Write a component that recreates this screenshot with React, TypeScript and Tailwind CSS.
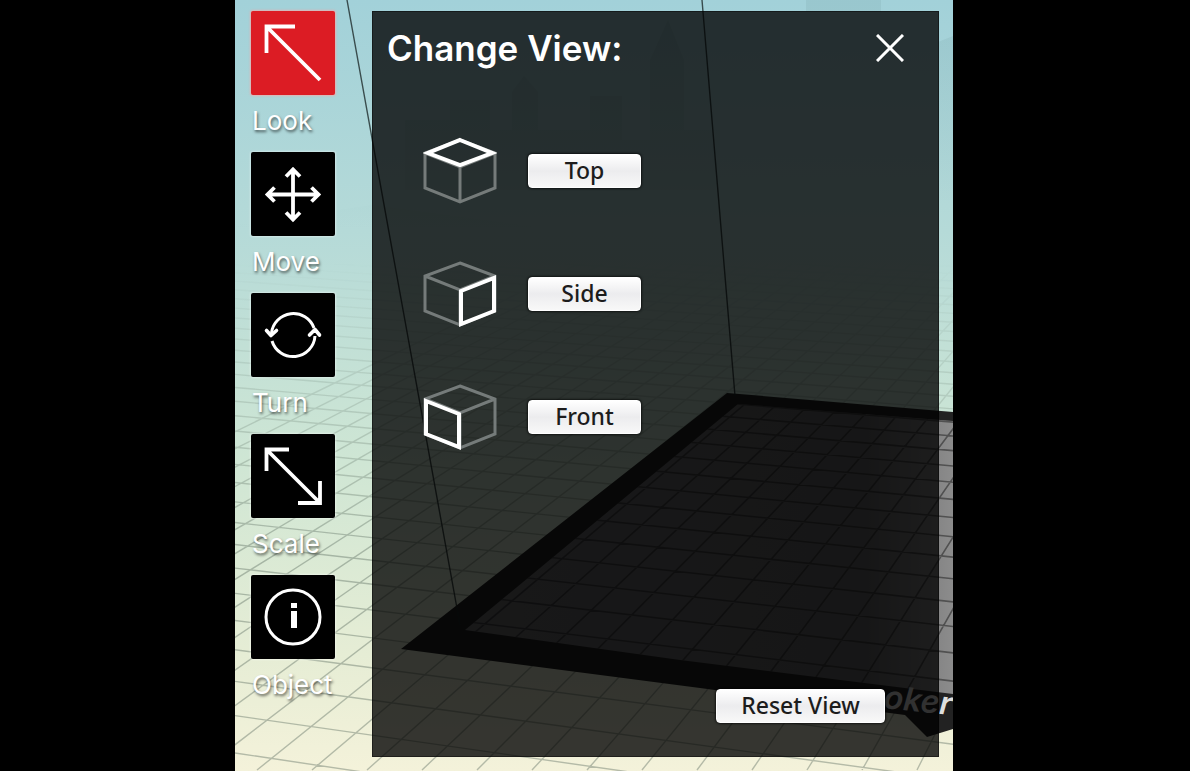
import { useState } from "react";

const TOOLS = ["Look", "Move", "Turn", "Scale", "Object"] as const;
type Tool = (typeof TOOLS)[number];

const VIEWS = [
  { name: "Top", face: "M37 3 69 16 37 28 5 16Z" },
  { name: "Side", face: "M38 31 71 18V51L38 64Z" },
  { name: "Front", face: "M3 18 36 31V64L3 51Z" },
];

// Vanishing points of the two families of floor lines
const VP_ROW = { x: -5760, y: -140 };
const VP_COL = { x: 1365, y: -120 };

const COLS = Array.from({ length: 40 }, (_, i) => {
  const x = 257 + (i - 13) * 55;
  return `M${x} 770L${VP_COL.x} ${VP_COL.y}`;
}).join("");

const ROWS = Array.from({ length: 40 }, (_, i) => {
  const y = -130 + 1 / (0.0009825 + i * 0.00005);
  const slope = (y - VP_ROW.y) / (235 - VP_ROW.x);
  return `M235 ${y}L960 ${y + slope * 725}`;
}).join("");

function ToolIcon({ tool }: { tool: Tool }) {
  return (
    <svg viewBox="0 0 84 84" className="size-[84px]" fill="none" stroke="white" strokeWidth="3.8" aria-hidden="true">
      {tool === "Look" && <path d="M44 15.5H15.5V42M16 16 69 69" />}
      {tool === "Move" && (
        <path d="M42 18V67M17 42.5H67M35 24.5 42 17.5 49 24.5M35 60.5 42 67.5 49 60.5M23.5 35.5 16.5 42.5 23.5 49.5M60.5 35.5 67.5 42.5 60.5 49.5" />
      )}
      {tool === "Turn" && (
        <>
          <path d="M20.5 40A22 22 0 0 1 63 35M64 43A22 22 0 0 1 21 48" strokeWidth="3" />
          <path
            d="M15.5 37.5 20 42.5 25.5 37.5M58.5 42 64 36.5 68.5 42"
            strokeWidth="3.6"
            strokeLinecap="round"
            strokeLinejoin="round"
          />
        </>
      )}
      {tool === "Scale" && <path d="M38 15.5H15.5V37M16 16 69 69M47 69H69V47" />}
      {tool === "Object" && (
        <>
          <circle cx="42" cy="42" r="27" strokeWidth="3" />
          <path d="M43 28V33M43 36V53" strokeWidth="6" />
        </>
      )}
    </svg>
  );
}

function Cube({ face }: { face: string }) {
  return (
    <svg viewBox="0 0 74 68" className="h-[68px] w-[74px]" fill="none" aria-hidden="true">
      <path
        d="M37 3 72 16V51L37 65 2 51V16ZM2 16 37 30 72 16M37 30V65"
        stroke="#757b7a"
        strokeWidth="3"
      />
      <path d={face} stroke="white" strokeWidth="4" />
    </svg>
  );
}

function Scene() {
  return (
    <svg
      viewBox="235 0 718 771"
      preserveAspectRatio="xMidYMin slice"
      className="absolute inset-0 h-full w-full"
      aria-hidden="true"
    >
      <defs>
        <linearGradient id="sky" x1="0" y1="0" x2="0" y2="1">
          <stop offset="0" stopColor="#a2d1d9" />
          <stop offset="0.3" stopColor="#b5dad8" />
          <stop offset="0.6" stopColor="#cfe6d4" />
          <stop offset="0.85" stopColor="#e6edd5" />
          <stop offset="1" stopColor="#f4f2da" />
        </linearGradient>
        <linearGradient id="fog" x1="0" y1="0" x2="0" y2="1">
          <stop offset="0.34" stopColor="black" />
          <stop offset="0.72" stopColor="white" />
        </linearGradient>
        <mask id="fade">
          <rect x="235" y="0" width="718" height="771" fill="url(#fog)" />
        </mask>
        <linearGradient id="haze" gradientUnits="userSpaceOnUse" x1="0" y1="20" x2="0" y2="230">
          <stop offset="0" stopColor="#7fa9ae" stopOpacity="0.25" />
          <stop offset="1" stopColor="#7fa9ae" stopOpacity="0" />
        </linearGradient>
        <linearGradient id="bed" gradientUnits="userSpaceOnUse" x1="520" y1="0" x2="953" y2="0">
          <stop offset="0" stopColor="#6c6c70" />
          <stop offset="0.8" stopColor="#666668" />
          <stop offset="1" stopColor="#8c8c8c" />
        </linearGradient>
      </defs>
      <rect x="235" y="0" width="718" height="771" fill="url(#sky)" />
      <g fill="url(#haze)">
        <path d="M405 190V120H450V100H490V130H512V92L524 76 538 92V130H590V96H622V140H650V60L668 20 684 60V130H720V190Z" />
        <path d="M806 0H881V12H806ZM938 42 953 36V200H938Z" />
        <path d="M235 225 372 205 560 230H235Z" />
      </g>
      <path d={COLS + ROWS} stroke="#5d6d62" strokeOpacity="0.42" strokeWidth="1.4" mask="url(#fade)" />
      <path d="M401 649 727 393 953 412V729L927 737 905 715 700 688Z" fill="#222" />
      <path d="M465 630 738 404 953 421V694L680 660Z" fill="url(#bed)" />
      <clipPath id="bed-clip">
        <path d="M465 630 738 404 953 421V694L680 660Z" />
      </clipPath>
      <path d={COLS + ROWS} clipPath="url(#bed-clip)" stroke="#222" strokeOpacity="0.55" strokeWidth="1.6" />
      <path d="M347 0 460 625M702 0 735 396" stroke="#1e2a2a" strokeOpacity="0.8" strokeWidth="1.4" />
      <text
        x="883"
        y="708"
        transform="rotate(6 883 708)"
        className="font-['Inter'] text-[32px] font-semibold italic"
        fill="#dedede"
      >
        oker
      </text>
    </svg>
  );
}

const pushButton =
  "flex h-[34px] items-center justify-center rounded border border-white bg-linear-to-b from-white via-[#ececee] via-50% to-[#f8f8f8] pb-0.5 font-['Noto_Sans',sans-serif] text-[23px] font-medium leading-7 text-[#1c1c1c] shadow-[0_0_2px_1px_rgba(0,0,0,0.6)]";

export default function App() {
  const [tool, setTool] = useState<Tool>("Look");
  const [open, setOpen] = useState(true);
  const [, setView] = useState("Top");

  return (
    <div className="flex min-h-screen justify-center bg-black pr-0.5 font-['Inter',sans-serif]">
      <div className="relative flex w-full max-w-[718px] overflow-hidden">
        <Scene />

        {/* Toolbar */}
        <nav className="relative ml-4 flex w-[84px] shrink-0 flex-col pt-[11px]">
          {TOOLS.map((name) => (
            <button
              key={name}
              type="button"
              aria-pressed={tool === name}
              onClick={() => {
                setTool(name);
                setOpen(true);
              }}
              className="flex h-[141px] flex-col text-left"
            >
              <span
                className={`rounded-xs ${
                  tool === name
                    ? "bg-[#dc1c24] shadow-[0_0_2px_1px_rgba(240,170,170,0.8)]"
                    : "bg-black shadow-[0_0_2px_1px_rgba(255,255,255,0.4)]"
                }`}
              >
                <ToolIcon tool={name} />
              </span>
              <span className="pl-px pt-2.5 text-[26px] leading-8 text-white [text-shadow:1px_2px_3px_rgba(0,0,0,0.6)]">
                {name}
              </span>
            </button>
          ))}
        </nav>

        {/* View panel */}
        {open && (
          <section className="relative mb-3.5 ml-[37px] mr-3.5 mt-[11px] flex flex-1 flex-col border border-black/40 bg-black/78">
            <header className="flex items-start justify-between pl-3.5 pr-[34px] pt-3.5">
              <h1 className="text-[35px] font-semibold leading-11 text-white">Change View:</h1>
              <button type="button" aria-label="Close" onClick={() => setOpen(false)} className="mt-2">
                <svg viewBox="0 0 28 28" className="size-7" stroke="white" strokeWidth="3" aria-hidden="true">
                  <path d="M1 1 27 27M27 1 1 27" />
                </svg>
              </button>
            </header>

            <ul className="flex flex-col gap-[55px] pl-[50px] pt-[67px]">
              {VIEWS.map((view) => (
                <li key={view.name} className="flex items-center gap-[31px]">
                  <Cube face={view.face} />
                  <button type="button" onClick={() => setView(view.name)} className={`${pushButton} w-[113px]`}>
                    {view.name}
                  </button>
                </li>
              ))}
            </ul>

            <footer className="mt-auto flex justify-end pb-[33px] pr-[53px]">
              <button type="button" onClick={() => setView("Top")} className={`${pushButton} w-[169px]`}>
                Reset View
              </button>
            </footer>
          </section>
        )}
      </div>
    </div>
  );
}
